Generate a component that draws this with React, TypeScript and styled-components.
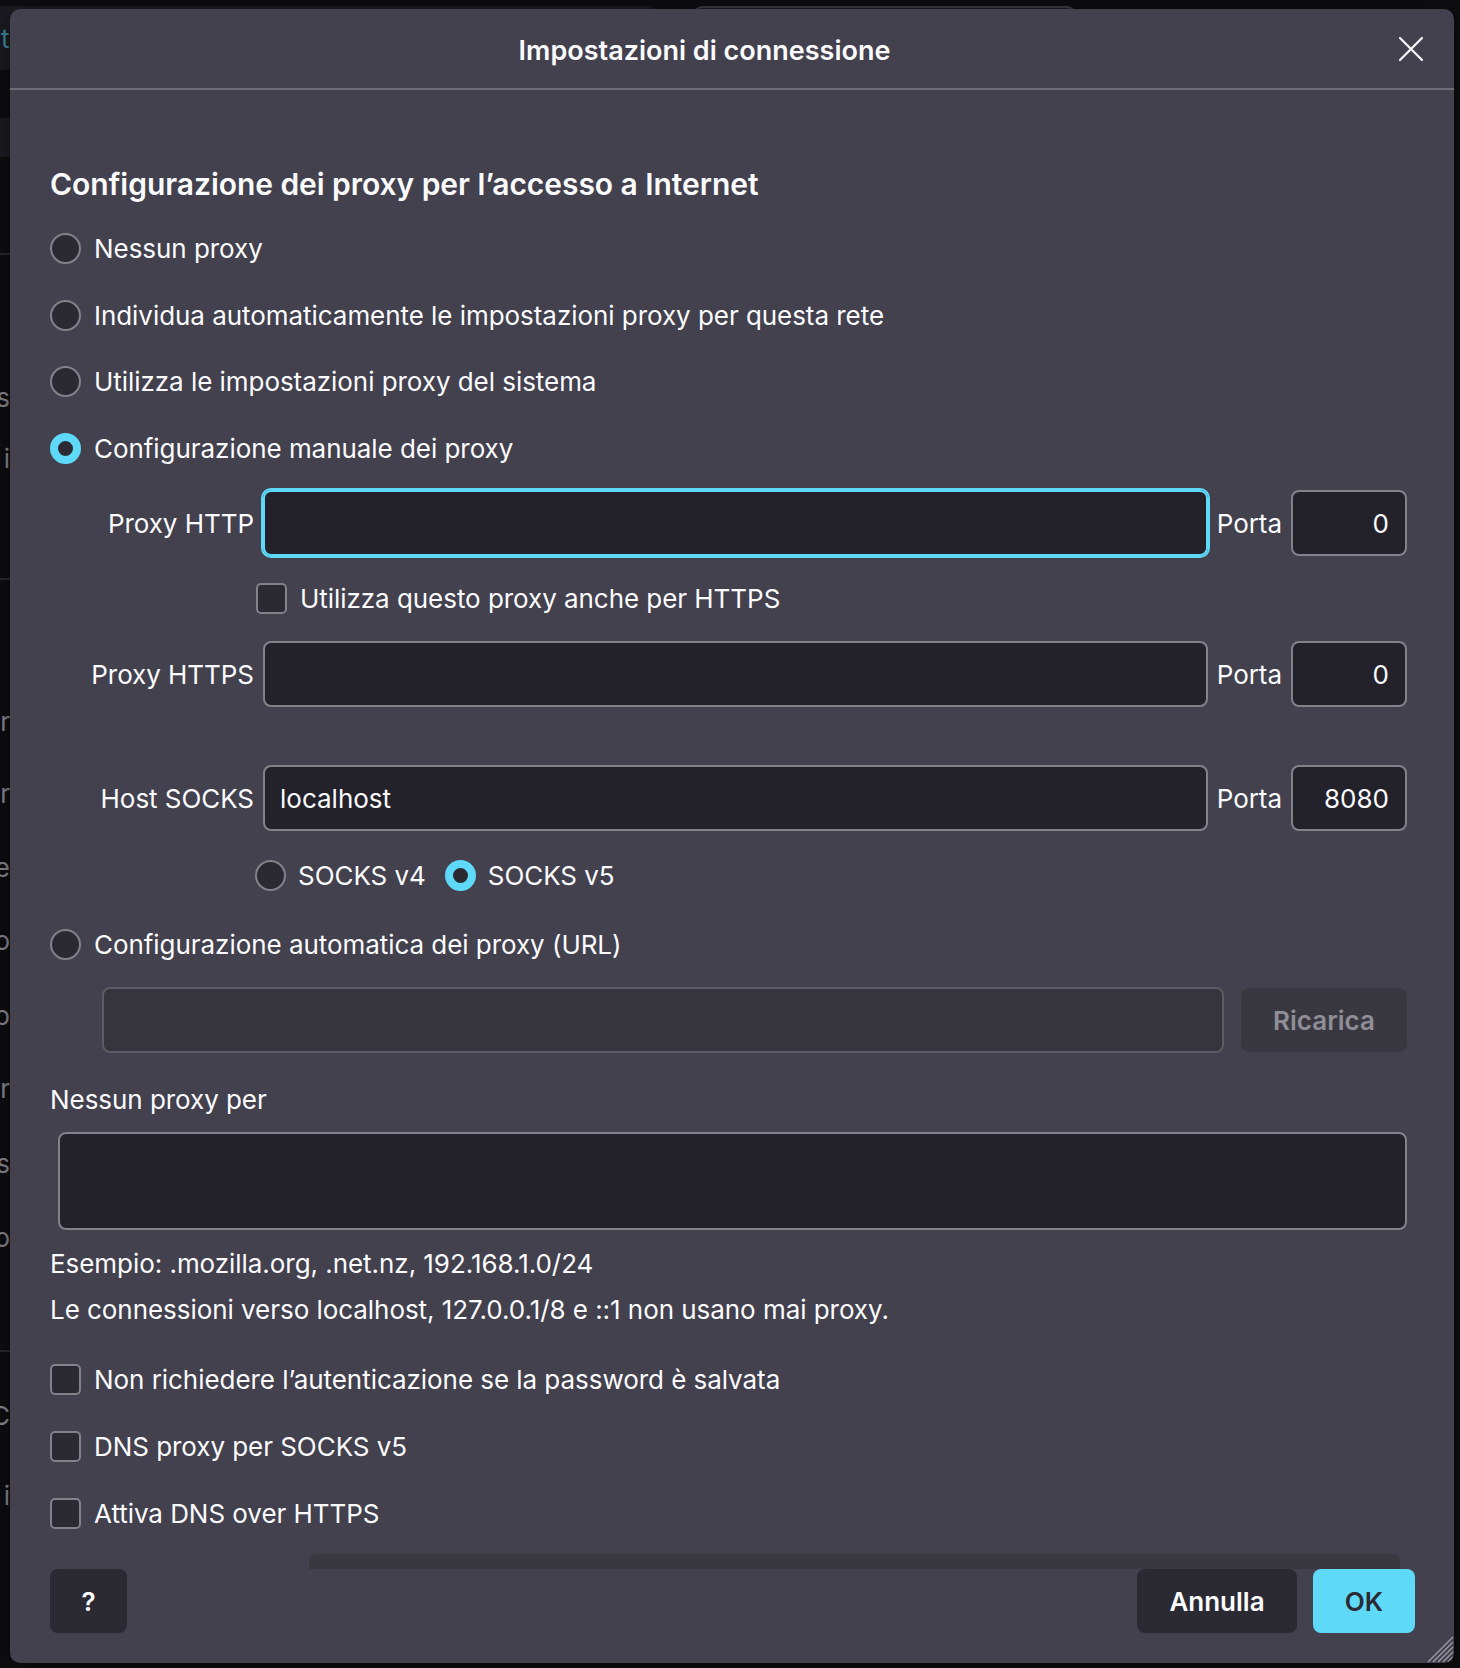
import React from 'react';
import styled, { createGlobalStyle } from 'styled-components';

const GlobalStyle = createGlobalStyle`
  html, body { margin: 0; padding: 0; background: #0e0e11; }
  body { font-family: Inter, "Noto Sans", sans-serif; color: #fbfbfe; }
  *, *::before, *::after { box-sizing: border-box; }
`;

const CYAN = '#5fd9f8';
const BORDER = '#83828b';
const FIELD = '#23222b';
const CONTROL = '#2b2a33';

const Page = styled.div`
  position: relative;
  width: 1460px;
  height: 1668px;
  overflow: hidden;
  background: #0e0e11;
`;

/* page behind the modal */
const Backdrop = styled.div`
  padding-top: 6px;
`;

const BackTop = styled.div`
  display: flex;
  gap: 37px;
`;

const BackBar = styled.div`
  width: 657px;
  height: 64px;
  background: #1c1b22;
  border-top-right-radius: 8px;
  display: flex;
  align-items: center;
  padding-left: 1px;
  font-size: 26px;
  color: #3d8aa0;
`;

const BackSearch = styled.div`
  width: 381px;
  height: 60px;
  border: 2px solid #3e3d45;
  border-radius: 8px;
  background: #1c1b22;
`;

const Sidebar = styled.div`
  width: 10px;
  display: flex;
  flex-direction: column;
`;

const SideBand = styled.div<{ $mt: number }>`
  margin-top: ${(p) => p.$mt}px;
  height: 39px;
  background: #1c1b22;
`;

const SideRule = styled.div<{ $mt: number }>`
  margin-top: ${(p) => p.$mt}px;
  height: 2px;
  background: #2a2930;
`;

const SideText = styled.div<{ $mt: number }>`
  margin-top: ${(p) => p.$mt}px;
  height: 40px;
  line-height: 40px;
  font-size: 26px;
  color: #8b8a93;
  display: flex;
  justify-content: flex-end;
  overflow: hidden;
  white-space: nowrap;
`;

/* the dialog */
const Dialog = styled.div`
  position: absolute;
  left: 10px;
  top: 9px;
  width: 1444px;
  height: 1654px;
  background: #42414d;
  border-radius: 10px;
  display: flex;
  flex-direction: column;
  overflow: hidden;
  box-shadow: 0 4px 24px rgba(0, 0, 0, 0.5);
`;

const Header = styled.header`
  height: 81px;
  flex-shrink: 0;
  display: grid;
  grid-template-columns: 1fr 56px;
  align-items: center;
  padding: 4px 15px 0 16px;
  border-bottom: 2px solid #6f6e77;
`;

const Title = styled.h1`
  margin: 0;
  text-align: center;
  font-size: 27px;
  font-weight: 600;
  line-height: 36px;
`;

const CloseButton = styled.button`
  width: 56px;
  height: 56px;
  margin-top: -3px;
  padding: 0;
  border: none;
  background: transparent;
  display: flex;
  align-items: center;
  justify-content: center;
  color: #fbfbfe;
`;

const Content = styled.div`
  flex: 1;
  min-height: 0;
  overflow: hidden;
  display: flex;
  flex-direction: column;
  padding: 76px 47px 0 40px;
  font-size: 26px;
  letter-spacing: -0.05px;

  & > * {
    flex-shrink: 0;
  }
`;

const Heading = styled.h2`
  margin: 0;
  font-size: 30px;
  font-weight: 600;
  line-height: 36px;
`;

const OptionRow = styled.label<{ $mt: number; $indent?: number }>`
  display: flex;
  align-items: center;
  height: 40px;
  margin-top: ${(p) => p.$mt}px;
  padding-left: ${(p) => p.$indent ?? 0}px;
  gap: 13px;
  white-space: nowrap;
`;

const RadioGroup = styled.div<{ $mt: number }>`
  display: flex;
  align-items: center;
  gap: 19px;
  height: 40px;
  margin-top: ${(p) => p.$mt}px;
  padding-left: 205px;
`;

const RadioItem = styled.span`
  display: flex;
  align-items: center;
  gap: 12px;
`;

const Radio = styled.span<{ $checked?: boolean }>`
  width: 31px;
  height: 31px;
  flex-shrink: 0;
  border-radius: 50%;
  background: ${CONTROL};
  border: ${(p) => (p.$checked ? `8px solid ${CYAN}` : `2px solid ${BORDER}`)};
`;

const Checkbox = styled.span`
  width: 31px;
  height: 31px;
  flex-shrink: 0;
  border-radius: 5px;
  background: ${CONTROL};
  border: 2px solid ${BORDER};
`;

const FieldRow = styled.div<{ $mt: number }>`
  display: flex;
  align-items: center;
  gap: 9px;
  margin-top: ${(p) => p.$mt}px;
`;

const FieldLabel = styled.span`
  width: 204px;
  flex-shrink: 0;
  text-align: right;
  white-space: nowrap;
`;

const TextField = styled.input<{ $focused?: boolean; $width?: number; $align?: string }>`
  height: 66px;
  flex: ${(p) => (p.$width ? `0 0 ${p.$width}px` : '1')};
  min-width: 0;
  margin: 0;
  padding: 0 16px 0 15px;
  border-radius: 8px;
  border: 2px solid ${(p) => (p.$focused ? CYAN : BORDER)};
  outline: ${(p) => (p.$focused ? `2px solid ${CYAN}` : 'none')};
  background: ${FIELD};
  color: #fbfbfe;
  font: inherit;
  text-align: ${(p) => p.$align ?? 'left'};
`;

const PortLabel = styled.span`
  white-space: nowrap;
`;

const UrlRow = styled.div<{ $mt: number }>`
  display: flex;
  align-items: center;
  gap: 17px;
  margin-top: ${(p) => p.$mt}px;
  padding-left: 52px;
`;

const DisabledField = styled.input`
  flex: 1;
  min-width: 0;
  height: 66px;
  margin: 0;
  border-radius: 8px;
  border: 2px solid #5d5c65;
  background: #36353e;
  font: inherit;
`;

const DisabledButton = styled.button`
  width: 166px;
  height: 64px;
  border: none;
  border-radius: 8px;
  background: #393841;
  color: #8f8e97;
  font: inherit;
  font-weight: 600;
`;

const Text = styled.div<{ $mt: number }>`
  height: 40px;
  line-height: 40px;
  margin-top: ${(p) => p.$mt}px;
  white-space: nowrap;
`;

const TextArea = styled.div`
  height: 98px;
  margin: 12px 0 0 8px;
  border-radius: 8px;
  border: 2px solid ${BORDER};
  background: ${FIELD};
`;

const ClippedSelect = styled.div`
  height: 66px;
  margin: 21px 7px 0 259px;
  border-radius: 8px;
  background: #393841;
`;

const Footer = styled.footer`
  height: 94px;
  flex-shrink: 0;
  display: flex;
  align-items: flex-start;
  justify-content: space-between;
  padding: 0 39px 0 40px;
`;

const ButtonGroup = styled.div`
  display: flex;
  gap: 16px;
`;

const Button = styled.button<{ $primary?: boolean; $width: number }>`
  width: ${(p) => p.$width}px;
  height: 64px;
  padding: 0;
  border: none;
  border-radius: 8px;
  background: ${(p) => (p.$primary ? CYAN : CONTROL)};
  color: ${(p) => (p.$primary ? CONTROL : '#fbfbfe')};
  font-family: Inter, "Noto Sans", sans-serif;
  font-size: 26px;
  font-weight: 600;
`;

const Grip = styled.svg`
  position: absolute;
  right: 0;
  bottom: 0;
`;

export default function App() {
  return (
    <Page>
      <GlobalStyle />
      <Backdrop>
        <BackTop>
          <BackBar>t</BackBar>
          <BackSearch />
        </BackTop>
        <Sidebar>
          <SideBand $mt={48} />
          <SideRule $mt={96} />
          <SideText $mt={123}>s</SideText>
          <SideText $mt={21}>i</SideText>
          <SideRule $mt={99} />
          <SideText $mt={122}>r</SideText>
          <SideText $mt={32}>r</SideText>
          <SideText $mt={34}>e</SideText>
          <SideText $mt={33}>o</SideText>
          <SideText $mt={35}>p</SideText>
          <SideText $mt={33}>r</SideText>
          <SideText $mt={35}>s</SideText>
          <SideText $mt={34}>o</SideText>
          <SideRule $mt={92} />
          <SideText $mt={44}>C</SideText>
          <SideText $mt={40}>i</SideText>
        </Sidebar>
      </Backdrop>

      <Dialog>
        <Header>
          <Title>Impostazioni di connessione</Title>
          <CloseButton aria-label="Chiudi">
            <svg width="26" height="26" viewBox="0 0 26 26">
              <path d="M2 2 24 24M24 2 2 24" stroke="currentColor" strokeWidth="2.2" strokeLinecap="round" />
            </svg>
          </CloseButton>
        </Header>

        <Content>
          <Heading>Configurazione dei proxy per l’accesso a Internet</Heading>
          <OptionRow $mt={26}>
            <Radio />
            Nessun proxy
          </OptionRow>
          <OptionRow $mt={27}>
            <Radio />
            Individua automaticamente le impostazioni proxy per questa rete
          </OptionRow>
          <OptionRow $mt={26}>
            <Radio />
            Utilizza le impostazioni proxy del sistema
          </OptionRow>
          <OptionRow $mt={27}>
            <Radio $checked />
            Configurazione manuale dei proxy
          </OptionRow>

          <FieldRow $mt={22}>
            <FieldLabel>Proxy HTTP</FieldLabel>
            <TextField $focused readOnly value="" />
            <PortLabel>Porta</PortLabel>
            <TextField $width={116} $align="right" readOnly value="0" />
          </FieldRow>
          <OptionRow $mt={22} $indent={206}>
            <Checkbox />
            Utilizza questo proxy anche per HTTPS
          </OptionRow>
          <FieldRow $mt={23}>
            <FieldLabel>Proxy HTTPS</FieldLabel>
            <TextField readOnly value="" />
            <PortLabel>Porta</PortLabel>
            <TextField $width={116} $align="right" readOnly value="0" />
          </FieldRow>
          <FieldRow $mt={58}>
            <FieldLabel>Host SOCKS</FieldLabel>
            <TextField readOnly value="localhost" />
            <PortLabel>Porta</PortLabel>
            <TextField $width={116} $align="right" readOnly value="8080" />
          </FieldRow>
          <RadioGroup $mt={24}>
            <RadioItem>
              <Radio />
              SOCKS v4
            </RadioItem>
            <RadioItem>
              <Radio $checked />
              SOCKS v5
            </RadioItem>
          </RadioGroup>

          <OptionRow $mt={29}>
            <Radio />
            Configurazione automatica dei proxy (URL)
          </OptionRow>
          <UrlRow $mt={23}>
            <DisabledField disabled />
            <DisabledButton disabled>Ricarica</DisabledButton>
          </UrlRow>

          <Text $mt={27}>Nessun proxy per</Text>
          <TextArea />
          <Text $mt={14}>Esempio: .mozilla.org, .net.nz, 192.168.1.0/24</Text>
          <Text $mt={6}>Le connessioni verso localhost, 127.0.0.1/8 e ::1 non usano mai proxy.</Text>

          <OptionRow $mt={29}>
            <Checkbox />
            Non richiedere l’autenticazione se la password è salvata
          </OptionRow>
          <OptionRow $mt={27}>
            <Checkbox />
            DNS proxy per SOCKS v5
          </OptionRow>
          <OptionRow $mt={27}>
            <Checkbox />
            Attiva DNS over HTTPS
          </OptionRow>
          <ClippedSelect />
        </Content>

        <Footer>
          <Button $width={77}>?</Button>
          <ButtonGroup>
            <Button $width={160}>Annulla</Button>
            <Button $width={102} $primary>OK</Button>
          </ButtonGroup>
        </Footer>

        <Grip width="28" height="28" viewBox="0 0 28 28">
          {[6, 11, 16, 21, 26].map((k) => (
            <path key={k} d={`M${28 - k} 27 27 ${28 - k}`} stroke="#9a99a2" strokeWidth="1.5" />
          ))}
        </Grip>
      </Dialog>
    </Page>
  );
}
